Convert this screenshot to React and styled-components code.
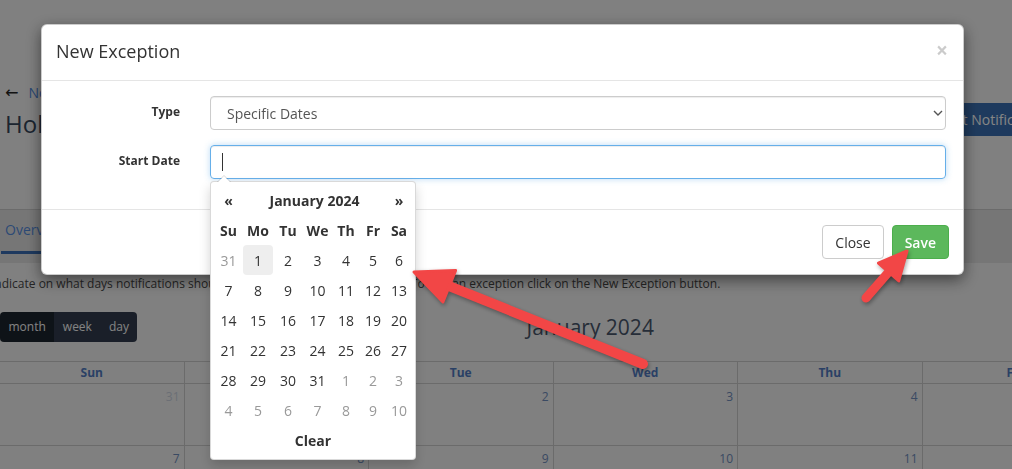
// Libraries
import React from "react";
import styled, { createGlobalStyle } from "styled-components";

// Global
const GlobalStyle = createGlobalStyle`
    html, body {
        margin: 0;
        padding: 0;
        background: #e9e9e9;
        overflow: hidden;
    }
    body {
        font-family: "Open Sans", "Liberation Sans", sans-serif;
        color: #333;
    }
    * {
        box-sizing: border-box;
    }
`;

// Page behind the modal
const Page = styled.div`
    width: 1291px;
    height: 469px;
`;

const Breadcrumb = styled.div`
    display: flex;
    align-items: center;
    padding: 83px 0 0 5px;
    height: 103px;
    font-size: 14px;
    line-height: 20px;
    color: #222;
`;

const BackArrow = styled.span`
    font-family: "DejaVu Sans", sans-serif;
    font-size: 16px;
`;

const CrumbLink = styled.span`
    margin-left: 10px;
    color: #4a80d0;
`;

const TitleRow = styled.div`
    display: flex;
    justify-content: space-between;
    align-items: flex-start;
    width: 1054px;
    margin-left: 5px;
`;

const PageTitle = styled.h1`
    margin: 0;
    font-size: 24px;
    font-weight: 400;
    line-height: 42px;
    color: #334357;
`;

const NotifyButton = styled.button`
    height: 33px;
    padding: 0 12px;
    border: 0;
    border-radius: 4px;
    background: #386bab;
    color: #f2f2f2;
    font-family: inherit;
    font-size: 14px;
`;

const TabBar = styled.div`
    margin-top: 64px;
    height: 54px;
    padding-left: 1px;
    border-top: 1px solid #c4c4c4;
    background: #d8d8d8;
`;

const Tab = styled.div`
    display: inline-block;
    padding: 10px 4px 11px;
    font-size: 14px;
    line-height: 20px;
    color: #5287d5;
    border-bottom: 3px solid ${(p) => (p.$active ? "#3769ad" : "transparent")};
`;

const Description = styled.p`
    margin: 13px 0 0 -9px;
    font-size: 12px;
    line-height: 16px;
    color: #444;
    white-space: nowrap;
`;

const CalToolbar = styled.div`
    display: flex;
    justify-content: space-between;
    align-items: center;
    margin-top: 20px;
    height: 30px;
`;

const ViewGroup = styled.div`
    display: flex;
    height: 30px;
    border-radius: 4px;
    overflow: hidden;
`;

const ViewButton = styled.div`
    padding: 0 8.5px;
    font-size: 12px;
    line-height: 30px;
    color: #eee;
    background: ${(p) => (p.$active ? "#1b232c" : "#313a4b")};
`;

const CalTitle = styled.h2`
    margin: 0;
    font-size: 21px;
    font-weight: 400;
    line-height: 30px;
    color: #455266;
`;

const NavGroup = styled.div`
    width: 248px;
    height: 30px;
`;

const MonthGrid = styled.div`
    display: grid;
    grid-template-columns: repeat(7, 184.5px);
    margin-top: 19px;
    border-top: 1px solid #c4c4c4;
`;

const DayHead = styled.div`
    height: 22px;
    border-right: 1px solid #c4c4c4;
    border-bottom: 1px solid #c4c4c4;
    text-align: center;
    font-size: 12px;
    font-weight: 700;
    line-height: 21px;
    color: #4e76b9;
`;

const DayCell = styled.div`
    height: 62px;
    padding: 5px 4px 0 0;
    border-right: 1px solid #c4c4c4;
    border-bottom: 1px solid #c4c4c4;
    text-align: right;
    font-size: 12px;
    line-height: 16px;
    color: ${(p) => (p.$other ? "#c3cad6" : "#6b87b4")};
`;

// Modal
const Backdrop = styled.div`
    position: fixed;
    inset: 0;
    background: rgba(0, 0, 0, 0.45);
`;

const Modal = styled.div`
    position: fixed;
    top: 24px;
    left: 41px;
    width: 923px;
    background: #fff;
    border: 1px solid rgba(0, 0, 0, 0.2);
    border-radius: 6px;
    box-shadow: 0 5px 15px rgba(0, 0, 0, 0.5);
`;

const ModalHeader = styled.div`
    display: flex;
    justify-content: space-between;
    align-items: flex-start;
    padding: 14px 15px 16px 14px;
    border-bottom: 1px solid #e5e5e5;
`;

const ModalTitle = styled.h4`
    margin: 0;
    font-size: 18px;
    font-weight: 400;
    line-height: 25px;
    color: #333;
`;

const CloseX = styled.span`
    font-size: 21px;
    font-weight: 700;
    line-height: 21px;
    color: #000;
    opacity: 0.2;
    margin-top: 1px;
`;

const ModalBody = styled.div`
    padding: 15px;
`;

const FormGroup = styled.div`
    display: grid;
    grid-template-columns: 123px 1fr;
    column-gap: 30px;
    margin: 0 2px 15px 0;
`;

const Label = styled.label`
    padding-top: 6px;
    text-align: right;
    font-size: 12px;
    font-weight: 700;
    line-height: 20px;
    color: #333;
`;

const SelectWrap = styled.div`
    position: relative;
`;

const Select = styled.select`
    display: block;
    width: 100%;
    height: 34px;
    padding: 0 12px 0 16px;
    border: 1px solid #ccc;
    border-radius: 4px;
    background: #fff;
    appearance: none;
    font-family: inherit;
    font-size: 14px;
    color: #555;
    box-shadow: inset 0 1px 1px rgba(0, 0, 0, 0.075);
`;

const Chevron = styled.svg`
    position: absolute;
    right: 3px;
    top: 14px;
    pointer-events: none;
`;

const InputWrap = styled.div`
    position: relative;
`;

const DateInput = styled.div`
    display: flex;
    align-items: center;
    height: 34px;
    padding: 0 12px;
    border: 1px solid #66afe9;
    border-radius: 4px;
    box-shadow: inset 0 1px 1px rgba(0, 0, 0, 0.075), 0 0 6px rgba(102, 175, 233, 0.45);
`;

const Caret = styled.span`
    width: 1px;
    height: 18px;
    margin-left: -1px;
    background: #333;
`;

const ModalFooter = styled.div`
    display: flex;
    justify-content: flex-end;
    gap: 8px;
    padding: 15px 14px 15px 15px;
    border-top: 1px solid #e5e5e5;
`;

const Button = styled.button`
    height: 34px;
    padding: 0 12px;
    border-radius: 4px;
    font-family: inherit;
    font-size: 14px;
    font-weight: ${(p) => (p.$primary ? 600 : 400)};
    color: ${(p) => (p.$primary ? "#fff" : "#333")};
    background: ${(p) => (p.$primary ? "#5cb85c" : "#fff")};
    border: 1px solid ${(p) => (p.$primary ? "#4cae4c" : "#ccc")};
`;

// Datepicker dropdown
const Picker = styled.div`
    position: absolute;
    top: calc(100% + 2px);
    left: 0;
    width: 206px;
    padding: 3px 3px 4px;
    background: #fff;
    border: 1px solid rgba(0, 0, 0, 0.15);
    border-radius: 4px;
    box-shadow: 0 6px 12px rgba(0, 0, 0, 0.175);
    z-index: 2;

    &::before {
        content: "";
        position: absolute;
        top: -7px;
        left: 6px;
        border-left: 7px solid transparent;
        border-right: 7px solid transparent;
        border-bottom: 7px solid rgba(0, 0, 0, 0.15);
    }
    &::after {
        content: "";
        position: absolute;
        top: -6px;
        left: 7px;
        border-left: 6px solid transparent;
        border-right: 6px solid transparent;
        border-bottom: 6px solid #fff;
    }
`;

const PickerGrid = styled.div`
    display: grid;
    grid-template-columns: 29px 30px 30px 29px 28px 26px 26px;
    grid-auto-rows: 30px;
    font-size: 14px;
`;

const PickerCell = styled.div`
    display: flex;
    align-items: center;
    justify-content: center;
    grid-column: ${(p) => p.$span || "auto"};
    border-radius: 4px;
    font-weight: ${(p) => (p.$bold ? 700 : 400)};
    color: ${(p) => (p.$muted ? "#999" : "#333")};
    background: ${(p) => (p.$active ? "#eee" : "transparent")};
`;

// Annotation arrows
const Annotations = styled.svg`
    position: fixed;
    left: 0;
    top: 0;
    pointer-events: none;
    filter: drop-shadow(1px 2px 2px rgba(0, 0, 0, 0.35));
`;

const Arrow = ({ from, to, shaft, headLen, headW }) => {
    const dx = to[0] - from[0];
    const dy = to[1] - from[1];
    const len = Math.hypot(dx, dy);
    const ux = dx / len;
    const uy = dy / len;
    const nx = -uy;
    const ny = ux;
    const bx = to[0] - ux * headLen;
    const by = to[1] - uy * headLen;
    const head = [
        [bx + (nx * headW) / 2, by + (ny * headW) / 2],
        to,
        [bx - (nx * headW) / 2, by - (ny * headW) / 2],
    ]
        .map((p) => p.join(","))
        .join(" ");

    return (
        <g>
            <line
                x1={from[0]}
                y1={from[1]}
                x2={bx + ux * 2}
                y2={by + uy * 2}
                stroke="#f24646"
                strokeWidth={shaft}
                strokeLinecap="round"
            />
            <polygon points={head} fill="#f24646" stroke="#f24646" strokeWidth="3" strokeLinejoin="round" />
        </g>
    );
};

const dayNames = ["Sun", "Mon", "Tue", "Wed", "Thu", "Fri", "Sat"];
const monthDays = [
    [31, 1, 2, 3, 4, 5, 6],
    [7, 8, 9, 10, 11, 12, 13],
];

const pickerWeeks = [
    [31, 1, 2, 3, 4, 5, 6],
    [7, 8, 9, 10, 11, 12, 13],
    [14, 15, 16, 17, 18, 19, 20],
    [21, 22, 23, 24, 25, 26, 27],
    [28, 29, 30, 31, 1, 2, 3],
    [4, 5, 6, 7, 8, 9, 10],
];

const isMuted = (week, idx) => (week === 0 && idx === 0) || (week === 4 && idx >= 4) || week === 5;

const App = () => {
    return (
        <>
            <GlobalStyle />
            <Page>
                <Breadcrumb>
                    <BackArrow>←</BackArrow>
                    <CrumbLink>Notification Schedules</CrumbLink>
                </Breadcrumb>
                <TitleRow>
                    <PageTitle>Holiday Schedule</PageTitle>
                    <NotifyButton>Test Notification</NotifyButton>
                </TitleRow>
                <TabBar>
                    <Tab $active>Overview</Tab>
                </TabBar>
                <Description>
                    Indicate on what days notifications should not be sent for these schedules. To add an exception
                    click on the New Exception button.
                </Description>
                <CalToolbar>
                    <ViewGroup>
                        <ViewButton $active>month</ViewButton>
                        <ViewButton>week</ViewButton>
                        <ViewButton>day</ViewButton>
                    </ViewGroup>
                    <CalTitle>January 2024</CalTitle>
                    <NavGroup />
                </CalToolbar>
                <MonthGrid>
                    {dayNames.map((d) => (
                        <DayHead key={d}>{d}</DayHead>
                    ))}
                    {monthDays.map((week, w) =>
                        week.map((day, i) => (
                            <DayCell key={`${w}-${i}`} $other={w === 0 && i === 0}>
                                {day}
                            </DayCell>
                        ))
                    )}
                </MonthGrid>
            </Page>

            <Backdrop />

            <Modal>
                <ModalHeader>
                    <ModalTitle>New Exception</ModalTitle>
                    <CloseX>×</CloseX>
                </ModalHeader>
                <ModalBody>
                    <FormGroup>
                        <Label>Type</Label>
                        <SelectWrap>
                            <Select defaultValue="dates">
                                <option value="dates">Specific Dates</option>
                            </Select>
                            <Chevron width="10" height="6" viewBox="0 0 10 6">
                                <path d="M1 1l4 4 4-4" fill="none" stroke="#555" strokeWidth="1.4" />
                            </Chevron>
                        </SelectWrap>
                    </FormGroup>
                    <FormGroup>
                        <Label>Start Date</Label>
                        <InputWrap>
                            <DateInput>
                                <Caret />
                            </DateInput>
                            <Picker>
                                <PickerGrid>
                                    <PickerCell $bold>«</PickerCell>
                                    <PickerCell $bold $span="span 5">
                                        January 2024
                                    </PickerCell>
                                    <PickerCell $bold>»</PickerCell>
                                    {["Su", "Mo", "Tu", "We", "Th", "Fr", "Sa"].map((d) => (
                                        <PickerCell key={d} $bold>
                                            {d}
                                        </PickerCell>
                                    ))}
                                    {pickerWeeks.map((week, w) =>
                                        week.map((day, i) => (
                                            <PickerCell
                                                key={`${w}-${i}`}
                                                $muted={isMuted(w, i)}
                                                $active={w === 0 && day === 1}
                                            >
                                                {day}
                                            </PickerCell>
                                        ))
                                    )}
                                    <PickerCell $bold $span="span 7">
                                        Clear
                                    </PickerCell>
                                </PickerGrid>
                            </Picker>
                        </InputWrap>
                    </FormGroup>
                </ModalBody>
                <ModalFooter>
                    <Button>Close</Button>
                    <Button $primary>Save</Button>
                </ModalFooter>
            </Modal>

            <Annotations width="1012" height="469" viewBox="0 0 1012 469">
                <Arrow from={[643, 364]} to={[414, 272]} shaft={10} headLen={38} headW={34} />
                <Arrow from={[866, 298]} to={[907, 251]} shaft={9} headLen={28} headW={27} />
            </Annotations>
        </>
    );
};

export default App;
